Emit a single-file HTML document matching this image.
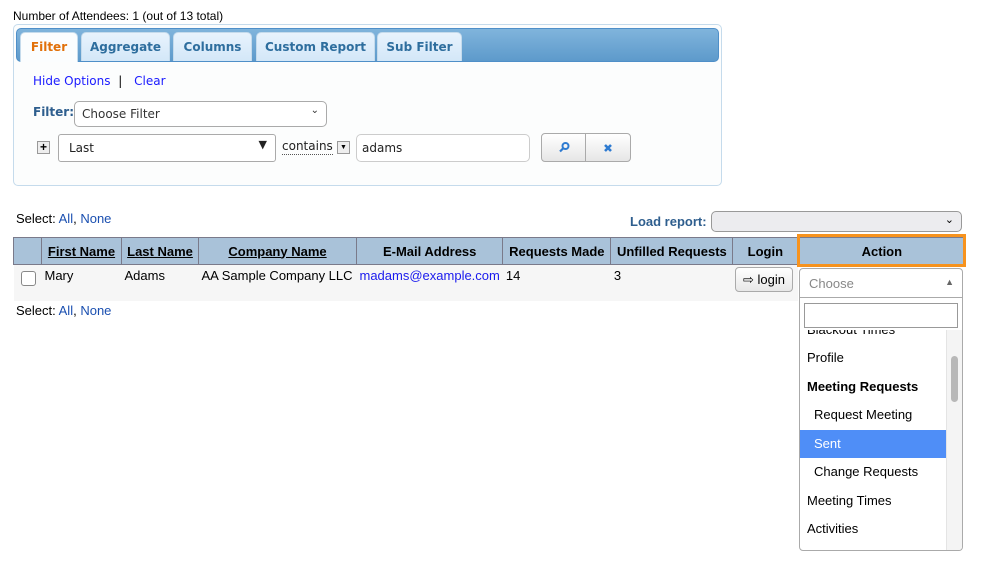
<!DOCTYPE html>
<html><head><meta charset="utf-8"><style>
*{box-sizing:border-box;margin:0;padding:0}
body{width:984px;height:573px;background:#fff;font-family:"Liberation Sans",Arial,sans-serif;font-size:13px;color:#000;position:relative;overflow:hidden}
.a{position:absolute;white-space:nowrap}
.v{font-family:"DejaVu Sans",Verdana,sans-serif}
.tab{position:absolute;top:32px;height:29px;background:linear-gradient(#e8f3fd,#d3e7f8);border:1px solid #c5dbec;border-bottom:none;border-radius:5px 5px 0 0;color:#2e6e9e;font-weight:bold;font-size:12px;text-align:center;line-height:29px}
.sel{position:absolute;border:1px solid #aaa;border-radius:5px;background:#fff}
th{background:#a9c2d9;border:1px solid #7a7a8a;font-size:13px;font-weight:bold;height:27px;padding:0 4px}
th u{text-decoration:underline}
td{font-size:13px;vertical-align:top;padding:3px 3px 0 3px;height:36px}
.it{position:absolute;left:0;width:146px;height:28px;line-height:28px;padding-left:7px;font-size:13px}
</style></head><body>
<div class="a" style="left:13px;top:9px;font-size:12px">Number of Attendees: 1 (out of 13 total)</div>
<div class="a" style="left:13px;top:24px;width:709px;height:162px;border:1px solid #c5dbec;border-radius:5px;background:#fcfdfd"></div>
<div class="a" style="left:16px;top:28px;width:703px;height:34px;border:1px solid #4f8fc8;border-radius:5px;background:linear-gradient(#80b4dc,#5d9acb)"></div>
<div class="tab v" style="left:20px;width:58px;background:#fbfdfe;color:#e17009;height:30px">Filter</div>
<div class="tab v" style="left:81px;width:89px">Aggregate</div>
<div class="tab v" style="left:173px;width:79px">Columns</div>
<div class="tab v" style="left:256px;width:119px">Custom Report</div>
<div class="tab v" style="left:377px;width:85px">Sub Filter</div>
<div class="a v" style="left:33px;top:74px;font-size:12px;color:#1a1aff">Hide Options <span style="color:#000;margin:0 8px 0 4px">|</span> Clear</div>
<div class="a v" style="left:33px;top:105px;font-size:12px;font-weight:bold;color:#2e5e8e">Filter:</div>
<div class="sel v" style="left:74px;top:101px;width:253px;height:26px;font-size:12px;color:#333;padding:5px 7px">Choose Filter<span style="position:absolute;right:7px;top:3px;font-size:10px">⌄</span></div>
<div class="a" style="left:37px;top:141px;width:13px;height:13px;border:1px solid #999;background:#eee;font-size:12px;font-weight:bold;line-height:10px;text-align:center">+</div>
<div class="sel v" style="left:58px;top:134px;width:218px;height:28px;font-size:12px;color:#222;padding:6px 10px;border-radius:3px">Last<span style="position:absolute;right:8px;top:3px;font-size:11px">▼</span></div>
<div class="a v" style="left:282px;top:139px;font-size:12px;color:#222;border-bottom:1px dotted #555;line-height:15px">contains</div>
<div class="a" style="left:337px;top:141px;width:13px;height:13px;border:1px solid #999;background:#eee;font-size:7px;text-align:center;line-height:11px">▼</div>
<div class="sel v" style="left:356px;top:134px;width:174px;height:28px;font-size:12px;color:#222;padding:6px 5px;border-color:#ccc">adams</div>
<div class="a" style="left:541px;top:133px;width:45px;height:29px;border:1px solid #aaa;border-radius:4px 0 0 4px;background:linear-gradient(#fff,#e6e6e6)"><svg width="43" height="27" viewBox="0 0 43 27"><circle cx="23.5" cy="12" r="3" fill="none" stroke="#2e7bd1" stroke-width="2"/><path d="M21 14.5 L18 17.5" stroke="#2e7bd1" stroke-width="2.2"/></svg></div>
<div class="a" style="left:585px;top:133px;width:46px;height:29px;border:1px solid #aaa;border-radius:0 4px 4px 0;background:linear-gradient(#fff,#e6e6e6)"><svg width="44" height="27" viewBox="0 0 44 27"><path d="M19 11 L25 17 M25 11 L19 17" stroke="#2e7bd1" stroke-width="2.6"/></svg></div>

<div class="a" style="left:16px;top:211px">Select: <span style="color:#1a4fb0">All</span>, <span style="color:#1a4fb0">None</span></div>
<div class="a" style="left:630px;top:214px;font-weight:bold;color:#2e5e8e">Load report:</div>
<div class="sel" style="left:711px;top:211px;width:251px;height:21px;background:#ececef;border-color:#999"><span style="position:absolute;right:7px;top:1px;font-size:11px">⌄</span></div>

<table class="a" style="left:13px;top:237px;border-collapse:collapse">
<tr><th style="width:28px"></th><th style="width:80px"><u>First Name</u></th><th style="width:77px"><u>Last Name</u></th><th style="width:158px"><u>Company Name</u></th><th style="width:146px">E-Mail Address</th><th style="width:108px">Requests Made</th><th style="width:122px">Unfilled Requests</th><th style="width:65px">Login</th><th style="width:168px">Action</th></tr>
<tr style="background:#f6f6f6"><td></td><td>Mary</td><td>Adams</td><td>AA Sample Company LLC</td><td style="color:#1a1aee">madams@example.com</td><td>14</td><td>3</td><td></td><td style="background:#fff"></td></tr>
</table>
<div class="a" style="left:21px;top:271px;width:15px;height:15px;border:1px solid #888;border-radius:3px;background:#fff"></div>
<div class="a" style="left:797px;top:234px;width:169px;height:33px;border:3px solid #f7931e"></div>
<div class="a" style="left:735px;top:267px;width:58px;height:25px;border:1px solid #aaa;border-radius:4px;background:linear-gradient(#fff,#e8e8e8);font-size:13px;line-height:23px;text-align:center">⇨ login</div>
<div class="a" style="left:16px;top:303px">Select: <span style="color:#1a4fb0">All</span>, <span style="color:#1a4fb0">None</span></div>

<div class="a" style="left:799px;top:268px;width:164px;height:283px;border:1px solid #aaa;border-radius:4px;background:#fff;overflow:hidden">
<div class="a" style="left:0;top:0;width:162px;height:29px;border-bottom:1px solid #aaa;color:#888;padding:7px 9px;font-size:13px">Choose<span style="position:absolute;right:8px;top:8px;font-size:9px;color:#666">▲</span></div>
<div class="a" style="left:4px;top:34px;width:154px;height:25px;border:1px solid #999"></div>
<div class="a" style="left:0;top:61px;width:162px;height:222px;overflow:hidden">
<div class="it" style="top:-14px">Blackout Times</div>
<div class="it" style="top:14px">Profile</div>
<div class="it" style="top:43px;font-weight:bold">Meeting Requests</div>
<div class="it" style="top:71px;padding-left:14px">Request Meeting</div>
<div class="it" style="top:100px;padding-left:14px;background:#4f8ef7;color:#fff">Sent</div>
<div class="it" style="top:128px;padding-left:14px">Change Requests</div>
<div class="it" style="top:157px">Meeting Times</div>
<div class="it" style="top:185px">Activities</div>
<div class="a" style="left:146px;top:0;width:16px;height:222px;background:#f4f4f4;border-left:1px solid #e4e4e4"></div>
<div class="a" style="left:151px;top:26px;width:7px;height:46px;background:#b8b8b8;border-radius:4px"></div>
</div>
</div>
</body></html>
